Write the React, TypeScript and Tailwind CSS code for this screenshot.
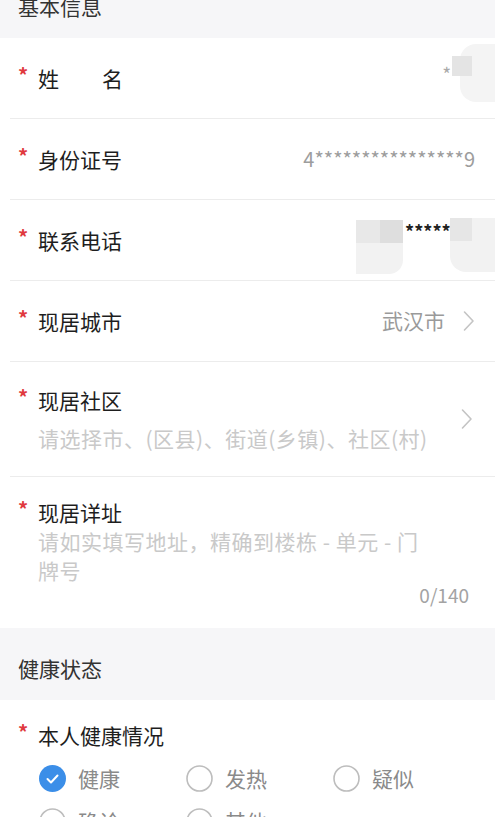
import React, { ReactElement } from "react";

const font = { fontFamily: '"Noto Sans CJK SC", "Noto Sans", sans-serif' };

const Star = () => (
  <span className="w-[20px] shrink-0 text-[20px] font-bold leading-none text-[#e0393e] -translate-y-[3px]">*</span>
);

const Chevron = () => (
  <svg width="12" height="22" viewBox="0 0 12 22" className="shrink-0">
    <polyline points="1.5,2 10,11 1.5,20" fill="none" stroke="#c4c4c4" strokeWidth="1.6" strokeLinecap="round" strokeLinejoin="round" />
  </svg>
);

const SectionHeader = ({ title, className = "" }: { title: string; className?: string }) => (
  <div className={`h-[72px] bg-[#f6f6f8] pl-[18px] pt-[24px] text-[21px] leading-[32px] text-[#333] ${className}`}>
    {title}
  </div>
);

const Row = ({ label, children }: { label: React.ReactNode; children?: React.ReactNode }) => (
  <div className="relative flex h-[81px] items-center border-b border-[#ececec] pl-[8px] pr-[20px]">
    <Star />
    <div className="text-[21px] leading-[30px] text-[#1e1e1e]">{label}</div>
    <div className="ml-auto flex items-center">{children}</div>
  </div>
);

const Radio = ({ label, checked }: { label: string; checked?: boolean }) => (
  <div className="flex w-[147px] items-center gap-[12px]">
    {checked ? (
      <svg width="27" height="27" viewBox="0 0 27 27">
        <circle cx="13.5" cy="13.5" r="13.5" fill="#3b8ee8" />
        <polyline points="8.5,14 12,17.5 18.5,10.5" fill="none" stroke="#fff" strokeWidth="2" strokeLinecap="round" strokeLinejoin="round" />
      </svg>
    ) : (
      <svg width="27" height="27" viewBox="0 0 27 27">
        <circle cx="13.5" cy="13.5" r="12.5" fill="none" stroke="#bdbdbd" strokeWidth="1.6" />
      </svg>
    )}
    <span className="text-[21px] leading-[30px] text-[#8a8a8a]">{label}</span>
  </div>
);

export const App = (): ReactElement => {
  return (
    <div className="h-[817px] w-[495px] overflow-hidden bg-white" style={font}>
      <SectionHeader title="基本信息" className="-mt-[34px]" />
      <div className="pl-[10px]">
        <Row label={<span>姓<span className="inline-block w-[43px]" />名</span>}>
          <span className="mr-[24px] -translate-y-[4px] text-[19px] text-[#aaa]">*</span>
          <div className="absolute right-0 top-[6px] h-[58px] w-[43px]">
            <div className="absolute left-[8px] top-[0px] h-[58px] w-[35px] rounded-l-[16px] bg-[#f4f4f4]" />
            <div className="absolute left-[0px] top-[12px] h-[20px] w-[20px] bg-[#e4e4e4]" />
          </div>
        </Row>
        <Row label="身份证号">
          <span className="text-[20px] text-[#9d9d9d]">4****************9</span>
        </Row>
        <Row label="联系电话">
          <div className="relative mr-[-20px] mt-[16px] flex h-[56px] w-[139px] items-start">
            <div className="absolute left-0 top-0 h-[54px] w-[47px] rounded-r-[14px] bg-[#f2f2f2]" />
            <div className="absolute left-[24px] top-0 h-[23px] w-[23px] bg-[#dedede]" />
            <div className="absolute left-0 top-0 h-[23px] w-[24px] bg-[#e8e8e8]" />
            <span className="absolute left-[49px] top-[-2px] text-[18px] font-bold text-[#222]">*****</span>
            <div className="absolute right-0 top-[-2px] h-[54px] w-[45px] rounded-l-[16px] bg-[#f2f2f2]" />
            <div className="absolute right-[23px] top-[-2px] h-[23px] w-[22px] bg-[#e6e6e6]" />
          </div>
        </Row>
        <Row label="现居城市">
          <span className="mr-[18px] text-[21px] text-[#9a9a9a]">武汉市</span>
          <Chevron />
        </Row>
        <div className="flex h-[115px] items-center border-b border-[#ececec] pl-[8px] pr-[22px]">
          <div className="flex-1">
            <div className="flex items-center">
              <Star />
              <div className="text-[21px] leading-[30px] text-[#1e1e1e]">现居社区</div>
            </div>
            <div className="mt-[8px] pl-[20px] text-[21px] leading-[30px] tracking-[0.5px] text-[#c9c9c9]">
              请选择市、(区县)、街道(乡镇)、社区(村)
            </div>
          </div>
          <Chevron />
        </div>
        <div className="h-[151px] pl-[8px] pr-[26px] pt-[20px]">
          <div className="flex items-center">
            <Star />
            <div className="text-[21px] leading-[30px] text-[#1e1e1e]">现居详址</div>
          </div>
          <div className="w-[420px] pl-[20px] text-[21px] leading-[29px] tracking-[0.5px] text-[#c9c9c9]">
            请如实填写地址，精确到楼栋 - 单元 - 门牌号
          </div>
          <div className="-mt-[2px] text-right text-[19px] leading-[24px] text-[#a3a3a3]">0/140</div>
        </div>
      </div>
      <SectionHeader title="健康状态" />
      <div className="pl-[18px] pt-[20px]">
        <div className="flex items-center">
          <Star />
          <div className="text-[21px] leading-[30px] text-[#1e1e1e]">本人健康情况</div>
        </div>
        <div className="mt-[13px] flex pl-[21px]">
          <Radio label="健康" checked />
          <Radio label="发热" />
          <Radio label="疑似" />
        </div>
        <div className="mt-[13px] flex pl-[21px]">
          <Radio label="确诊" />
          <Radio label="其他" />
        </div>
      </div>
    </div>
  );
};

export default App;
